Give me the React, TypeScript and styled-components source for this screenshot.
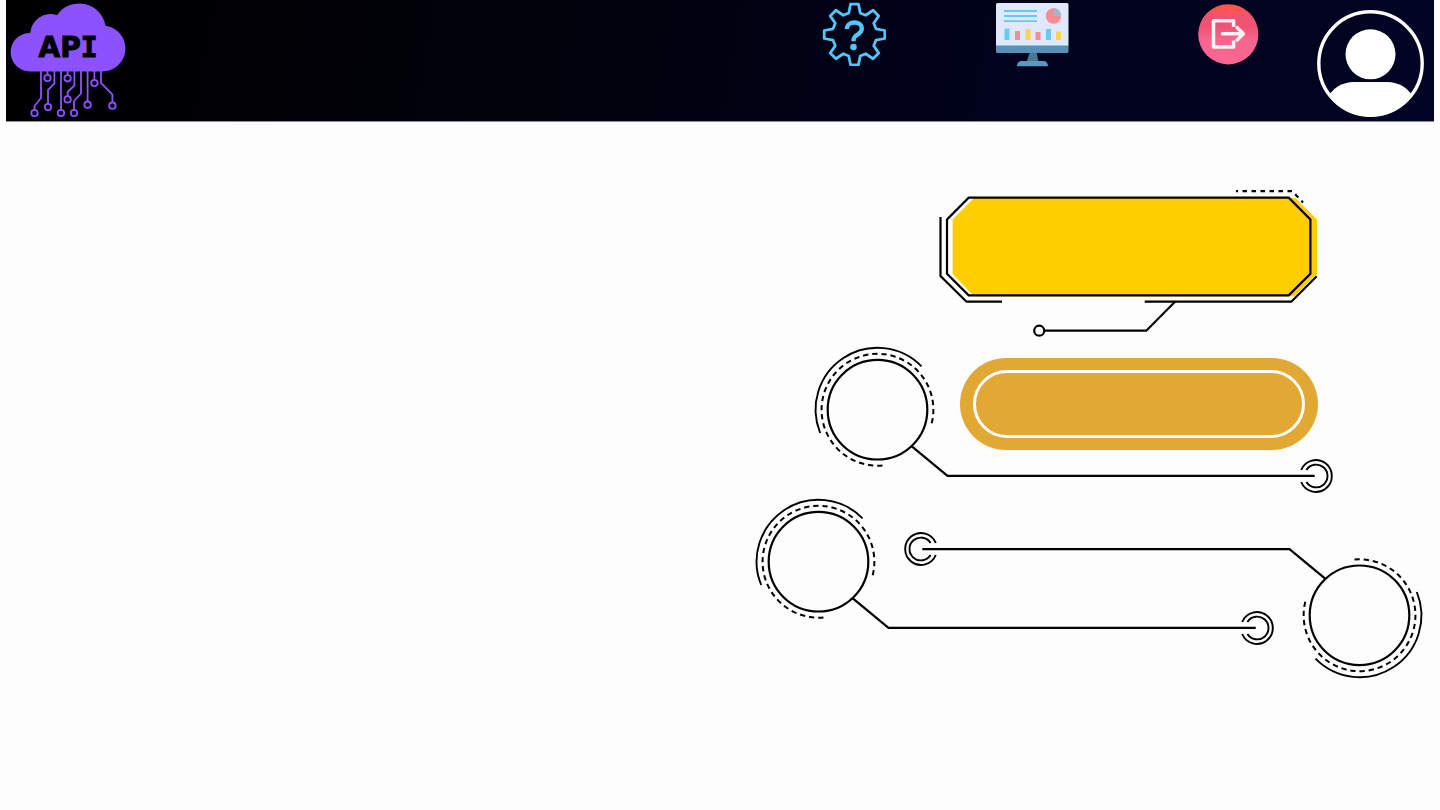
import React from "react";
import styled, { createGlobalStyle } from "styled-components";

const GlobalStyle = createGlobalStyle`
  *, *::before, *::after { box-sizing: border-box; }
  body {
    margin: 0;
    background: #fdfdfd;
    font-family: "DejaVu Sans", sans-serif;
  }
`;

const Header = styled.header`
  display: flex;
  align-items: flex-start;
  margin: 0 6px;
  padding: 0 10px 0 4px;
  height: 122px;
  background: linear-gradient(100deg, #000000 0%, #010106 20%, #01020e 45%, #01021a 65%, #020424 100%);
  border-bottom: 1px solid #8c8c96;
`;

const LogoLink = styled.a`
  display: block;
  line-height: 0;
`;

const Nav = styled.nav`
  display: flex;
  align-items: flex-start;
  margin-left: auto;
`;

const NavButton = styled.button<{ $before?: number; $top: number }>`
  display: block;
  margin: ${(p) => p.$top}px 0 0 ${(p) => p.$before ?? 0}px;
  padding: 0;
  border: 0;
  background: none;
  line-height: 0;
  cursor: pointer;
`;

const Stage = styled.main`
  display: flex;
  flex-direction: column;
  align-items: flex-end;
  padding: 64px 17px 48px;
`;

const FrameButton = styled.button`
  display: block;
  margin-right: 105px;
  padding: 0;
  border: 0;
  background: none;
  line-height: 0;
  cursor: pointer;
`;

const Overlap = styled.div<{ $top: number; $right?: number }>`
  display: grid;
  margin: ${(p) => p.$top}px ${(p) => p.$right ?? 0}px 0 0;

  > * {
    grid-area: 1 / 1;
  }
`;

const PairedCallouts = styled(Overlap)`
  width: 668px;
`;

const CalloutSvg = styled.svg<{ $flipped?: boolean }>`
  display: block;
  overflow: visible;
  margin-top: ${(p) => (p.$flipped ? 33 : 0)}px;
  justify-self: ${(p) => (p.$flipped ? "end" : "start")};
  transform: ${(p) => (p.$flipped ? "rotate(180deg)" : "none")};
`;

const PillButton = styled.button`
  margin: 12px 0 0 146px;
  width: 358px;
  height: 92px;
  padding: 12px 13px;
  border: 0;
  border-radius: 46px;
  background: #e1a934;
  cursor: pointer;
`;

const PillRing = styled.span`
  display: block;
  height: 100%;
  border: 3px solid #ffffff;
  border-radius: 34px;
`;

const TRACES = [
  { d: "M41 70V98L34.5 106V110", x: 34.5, y: 113 },
  { d: "M47.5 70V75", x: 47.5, y: 78 },
  { d: "M54.4 70V83.5L48 90V104", x: 48, y: 107 },
  { d: "M61 70V110", x: 61, y: 113 },
  { d: "M67.6 70V75", x: 67.6, y: 78.3 },
  { d: "M74.4 70V85.5L67.6 92V96", x: 67.6, y: 99.4 },
  { d: "M81 70V93.5L74 101V110", x: 74, y: 113 },
  { d: "M87.6 70V101", x: 87.6, y: 104.7 },
  { d: "M94.4 70V80", x: 94.4, y: 83 },
  { d: "M101 70V83L112.4 94.5V102", x: 112.4, y: 105.7 },
];

function CloudLogo() {
  return (
    <svg width="116" height="121" viewBox="10 0 116 121">
      <path
        fill="#8c52ff"
        d="M29.8 71.4A19.2 19.2 0 0 1 29.8 33H30.2A20.3 20.3 0 0 1 57 15.2A26.7 26.7 0 0 1 105.500 25.8A22.9 22.9 0 0 1 102 71.4Z"
      />
      <g fill="none" stroke="#8c52ff" strokeWidth="1.8">
        {TRACES.map((t) => (
          <React.Fragment key={t.d}>
            <path d={t.d} />
            <circle cx={t.x} cy={t.y} r="3.2" />
          </React.Fragment>
        ))}
      </g>
      <text
        x="68"
        y="57"
        textAnchor="middle"
        fontFamily='"DejaVu Sans", sans-serif'
        fontWeight="700"
        fontSize="28"
        fill="#000000"
        stroke="#000000"
        strokeWidth="1"
      >
        AP<tspan fontFamily='"DejaVu Sans Mono", monospace'>I</tspan>
      </text>
    </svg>
  );
}

const GEAR_POINTS = Array.from({ length: 8 }, (_, i) => {
  const a = (i * Math.PI) / 4;
  return [
    [-5.7, -21.5],
    [-4, -30.3],
    [4, -30.3],
    [5.7, -21.5],
  ]
    .map(([x, y]) => {
      const px = x * Math.cos(a) - y * Math.sin(a);
      const py = x * Math.sin(a) + y * Math.cos(a);
      return `${px.toFixed(2)},${py.toFixed(2)}`;
    })
    .join(" ");
}).join(" ");

function GearIcon() {
  return (
    <svg width="64" height="64" viewBox="-32.500 -32.500 64 64" fill="none" stroke="#52c5fa">
      <polygon points={GEAR_POINTS} strokeWidth="2.800" strokeLinejoin="round" />
      <path d="M-7.800 -5.500C-7.600 -9.700 -4.300 -12 0 -12C4.600 -12 7.300 -9.600 7.300 -6.200C7.300 -2.800 5.300 -1.200 2.700 0.300C-0.300 2 -1 3.200 -1 6.800" strokeWidth="4.400" />
      <circle cx="-1" cy="12.500" r="3.300" fill="#52c5fa" stroke="none" />
    </svg>
  );
}

function DashboardIcon() {
  return (
    <svg width="73" height="64" viewBox="996 3 73 64">
      <path fill="#4b7698" d="M1030 52H1036.5L1038.5 62H1026.5Z" />
      <path fill="#5c97bf" d="M1021 61H1044C1046.500 61 1048 64 1048 66.300H1017C1017 64 1018.500 61 1021 61Z" />
      <path fill="#e0e8fd" d="M997.5 3H1067Q1068.500 3 1068.500 4.500V46H996V4.500Q996 3 997.500 3Z" />
      <path fill="#5591b8" d="M996 45.500H1068.500V51.500Q1068.500 53 1067 53H997.500Q996 53 996 51.500Z" />
      <path stroke="#62c9f2" strokeWidth="1.8" d="M1004 11H1037M1004 16H1037M1004 21.200H1037" />
      <circle cx="1053.500" cy="16" r="7.700" fill="#fa8b94" />
      <path fill="#9fb6cc" d="M1053.500 16V8.300A7.700 7.700 0 0 1 1061.200 16Z" />
      <path fill="#66cbf4" d="M1004.500 28.500H1009.500V40H1004.500ZM1046 29H1051V40H1046Z" />
      <path fill="#fa8b94" d="M1015 31H1020V40H1015ZM1035.500 32H1040.500V40H1035.500Z" />
      <path fill="#ffd34f" d="M1025.500 29H1030.500V40H1025.500ZM1056 31.500H1061V40H1056Z" />
    </svg>
  );
}

function ExitIcon() {
  return (
    <svg width="61" height="61" viewBox="1198 4 61 61">
      <defs>
        <linearGradient id="exitFill" x1="0" y1="0" x2="0" y2="1">
          <stop offset="0" stopColor="#ff574b" />
          <stop offset="0.1" stopColor="#fb5552" />
          <stop offset="0.2" stopColor="#ef5370" />
          <stop offset="0.38" stopColor="#ef5374" />
          <stop offset="0.6" stopColor="#f9658e" />
          <stop offset="1" stopColor="#f9668f" />
        </linearGradient>
      </defs>
      <circle cx="1228.300" cy="34.300" r="30.100" fill="url(#exitFill)" />
      <g fill="none" stroke="#fff1f4" strokeWidth="3.500" strokeLinejoin="round">
        <path d="M1233.600 27V20.700H1213.500V47H1233.600V40.500" />
        <path d="M1222.500 33.800H1243" strokeLinecap="round" />
        <path d="M1237.200 27.700L1243.400 33.800L1237.200 40" strokeLinecap="round" />
      </g>
    </svg>
  );
}

function AvatarIcon() {
  return (
    <svg width="108" height="108" viewBox="1316 10 108 108">
      <defs>
        <clipPath id="avatarClip">
          <circle cx="1370.500" cy="63.500" r="53" />
        </clipPath>
      </defs>
      <circle cx="1370.500" cy="54.300" r="25" fill="#ffffff" />
      <path
        clipPath="url(#avatarClip)"
        fill="#ffffff"
        d="M1326 100C1332 88 1342 82 1354 82H1387C1399 82 1409 88 1415 100V118H1326Z"
      />
      <circle cx="1370.500" cy="63.500" r="51.700" fill="none" stroke="#ffffff" strokeWidth="3.400" />
    </svg>
  );
}

function AngularFrame() {
  return (
    <svg width="380" height="152" viewBox="938 186 380 152" fill="none" stroke="#000000" strokeWidth="2.200">
      <path
        stroke="none"
        fill="#ffce00"
        d="M974 198H1295.500L1317 219.500V274L1294.500 296.200H974L952.600 274V219.500Z"
      />
      <path d="M968.700 197.700H1288.700L1310.400 219.500V273.700L1288.700 295.300H968.700L947 273.700V219.500Z" />
      <path d="M940.500 217V276L966.500 301.700H1002" />
      <path d="M1144.700 301.700H1291.300L1316.700 276.300" />
      <path d="M1175 301.700L1146.300 330.700H1044.500" />
      <circle cx="1039.200" cy="330.700" r="5" />
      <path strokeDasharray="4.500 4.500" strokeDashoffset="2.500" d="M1236 191.200H1292.500L1303 202.500" />
    </svg>
  );
}

function Callout({ flipped }: { flipped?: boolean }) {
  return (
    <CalloutSvg
      $flipped={flipped}
      width="520"
      height="148"
      viewBox="0 0 520 148"
      fill="none"
      stroke="#000000"
      strokeWidth="2.2"
      aria-hidden="true"
    >
      <circle cx="63.5" cy="63.7" r="49.800" />
      <path strokeWidth="1.9" d="M6.200 87A61.800 61.800 0 0 1 107.500 20.300" />
      <path strokeWidth="2" strokeDasharray="5.300 3.910" d="M117.700 77.300A55.900 55.900 0 1 0 68.500 119.400" />
      <path d="M97.500 100.200L133.500 129.800H500.700" />
      <path strokeWidth="1.9" d="M487.200 124A15.900 15.900 0 1 1 487.200 136" />
      <path strokeWidth="1.9" d="M492.400 124A11.400 11.400 0 1 1 492.400 136" />
    </CalloutSvg>
  );
}

export default function App() {
  return (
    <>
      <GlobalStyle />
      <Header>
        <LogoLink href="#" aria-label="API">
          <CloudLogo />
        </LogoLink>
        <Nav>
          <NavButton $top={2} aria-label="Help">
            <GearIcon />
          </NavButton>
          <NavButton $top={3} $before={110} aria-label="Dashboard">
            <DashboardIcon />
          </NavButton>
          <NavButton $top={4} $before={129} aria-label="Log out">
            <ExitIcon />
          </NavButton>
          <NavButton $top={10} $before={57} aria-label="Profile">
            <AvatarIcon />
          </NavButton>
        </Nav>
      </Header>
      <Stage>
        <FrameButton aria-label="Primary action">
          <AngularFrame />
        </FrameButton>
        <Overlap $top={8} $right={89}>
          <Callout />
          <PillButton aria-label="Secondary action">
            <PillRing />
          </PillButton>
        </Overlap>
        <PairedCallouts $top={4}>
          <Callout />
          <Callout flipped />
        </PairedCallouts>
      </Stage>
    </>
  );
}
